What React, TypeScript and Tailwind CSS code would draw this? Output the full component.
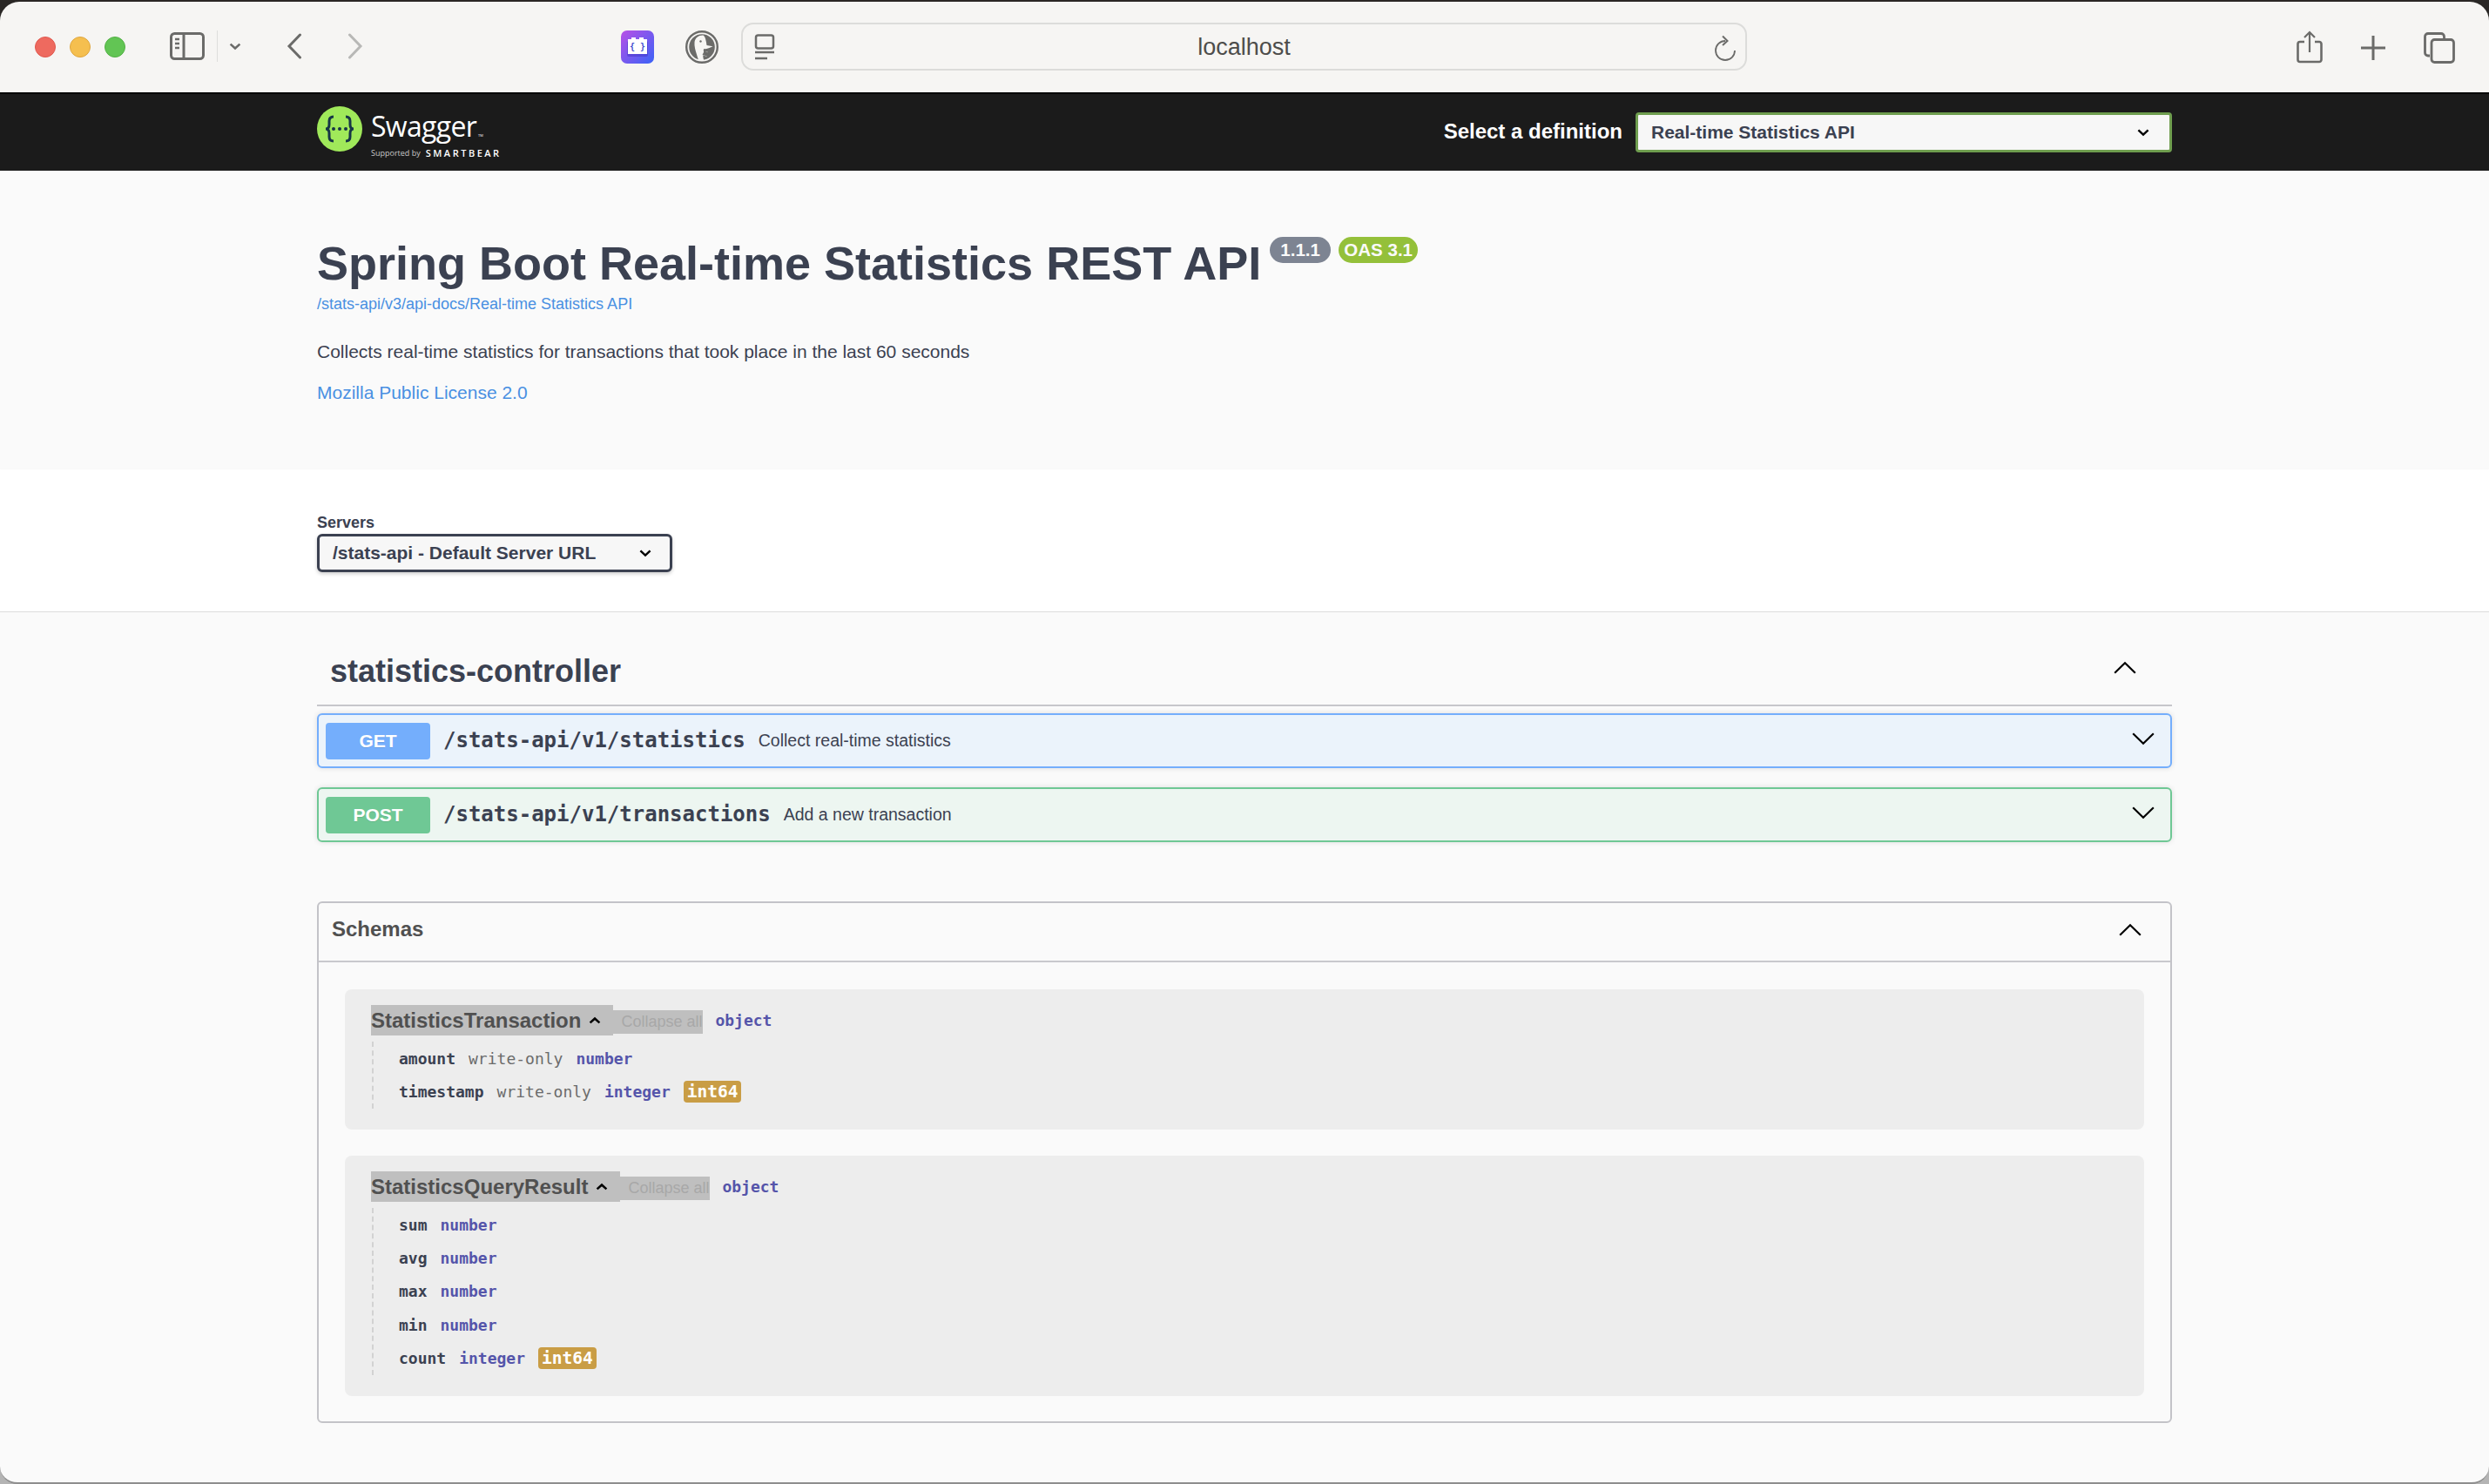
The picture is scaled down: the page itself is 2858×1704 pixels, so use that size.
import type { ReactNode } from "react";

const mono = "font-['DejaVu_Sans_Mono',monospace]";

function Caret({ up, width, height, stroke, className }: { up?: boolean; width: number; height: number; stroke: number; className?: string }) {
  const pad = stroke;
  const d = up
    ? `M${pad} ${height - pad}L${width / 2} ${pad}L${width - pad} ${height - pad}`
    : `M${pad} ${pad}L${width / 2} ${height - pad}L${width - pad} ${pad}`;
  return (
    <svg width={width} height={height} viewBox={`0 0 ${width} ${height}`} className={className} fill="none" stroke="currentColor" strokeWidth={stroke}>
      <path d={d} />
    </svg>
  );
}

function SwaggerLogo() {
  return (
    <div className="mb-[1px] flex items-start">
      <svg width="52" height="52" viewBox="0 0 52 52" className="shrink-0">
        <circle cx="26" cy="26" r="26" fill="#a0e95a" />
        <path d="M19 12c-4 0-5 2-5 5v4c0 3-1 5-4 5 3 0 4 2 4 5v4c0 3 1 5 5 5" fill="none" stroke="#173646" strokeWidth="3" />
        <path d="M33 12c4 0 5 2 5 5v4c0 3 1 5 4 5-3 0-4 2-4 5v4c0 3-1 5-5 5" fill="none" stroke="#173646" strokeWidth="3" />
        <circle cx="19" cy="26" r="2" fill="#173646" />
        <circle cx="26" cy="26" r="2" fill="#173646" />
        <circle cx="33" cy="26" r="2" fill="#173646" />
      </svg>
      <div className="ml-[10px] mt-[5px] flex flex-col font-['Open_Sans',sans-serif] text-white">
        <div className="flex items-end">
          <span className="text-[32px] leading-[36px] tracking-[-0.7px]">Swagger</span>
          <span className="mb-[5px] ml-[2px] text-[4px] leading-none">TM</span>
        </div>
        <div className="mt-[7px] flex items-center whitespace-nowrap leading-none">
          <span className="text-[9px] text-[#c8c8c8]">Supported by</span>
          <span className="ml-[6px] text-[11px] font-semibold tracking-[2.5px]">SMARTBEAR</span>
        </div>
      </div>
    </div>
  );
}

function BrowserBar() {
  return (
    <div className="flex h-[104px] shrink-0 items-start rounded-t-[22px] bg-[#f6f5f3] pt-[24px] text-[#6b6b69]">
      <div className="ml-[40px] mt-[16px] flex gap-[16px]">
        <div className="h-[24px] w-[24px] rounded-full border border-[#e0584e] bg-[#ee6a5f]" />
        <div className="h-[24px] w-[24px] rounded-full border border-[#dfa63e] bg-[#f5bf4f]" />
        <div className="h-[24px] w-[24px] rounded-full border border-[#52b044] bg-[#62c554]" />
      </div>
      <svg width="40" height="32" viewBox="0 0 40 32" className="ml-[51px] mt-[11px]" fill="none" stroke="#6b6b69" strokeWidth="3">
        <rect x="1.5" y="1.5" width="37" height="29" rx="4" />
        <path d="M16 2v28" />
        <path d="M6 8h5M6 13h5M6 18h5" strokeWidth="2.5" />
      </svg>
      <div className="ml-[14px] mt-[9px] h-[36px] w-px bg-[#dededc]" />
      <Caret width={16} height={10} stroke={2.6} className="ml-[12px] mt-[22px]" />
      <svg width="18" height="30" viewBox="0 0 18 30" className="ml-[51px] mt-[12px]" fill="none" stroke="#6b6b69" strokeWidth="3" strokeLinecap="round">
        <path d="M15.500 2L3 15l12.500 13" />
      </svg>
      <svg width="18" height="30" viewBox="0 0 18 30" className="ml-[52px] mt-[12px]" fill="none" stroke="#b8b8b6" strokeWidth="3" strokeLinecap="round">
        <path d="M2.500 2L15 15 2.500 28" />
      </svg>
      <svg width="38" height="38" viewBox="0 0 38 38" className="ml-[296px] mt-[9px]">
        <defs>
          <linearGradient id="extGradient" x1="0" y1="0" x2="1" y2="1">
            <stop offset="0" stopColor="#b94fe6" />
            <stop offset="1" stopColor="#3a63f7" />
          </linearGradient>
        </defs>
        <rect width="38" height="38" rx="7" fill="url(#extGradient)" />
        <rect x="7" y="12" width="24" height="18" rx="2" fill="#3f2fc0" opacity="0.45" />
        <path d="M8 10h4V8h5v2h4V8h5v2h4v17H8z" fill="#ffffff" />
        <text x="19" y="22" textAnchor="middle" fontSize="10" fontWeight="700" fill="#3f4fd0" fontFamily="DejaVu Sans Mono, monospace">{"{ }"}</text>
      </svg>
      <svg width="38" height="38" viewBox="0 0 38 38" className="ml-[36px] mt-[9px]">
        <circle cx="19" cy="19" r="17.800" fill="#f6f5f3" stroke="#6b6b69" strokeWidth="2.400" />
        <circle cx="19" cy="19" r="14.800" fill="#6b6b69" />
        <path d="M20 5.500c-5 0-9 3-9.500 8-.4 5 1 9 2.500 14 .6 2.300 1.500 5 2.200 6.500 2 .5 4 .5 6 .2-.7-2.200-1-4-.9-5.700l4.200 1.300 1-5.300-4.200.6c-.6-1.800-.8-3 .2-4 2.500.3 7-1.200 10-2.900l-7-1.300c-.7-4.700-1.500-9.700-4-11.400z" fill="#f6f5f3" />
        <circle cx="17.500" cy="12.500" r="1.200" fill="#6b6b69" />
        <path d="M19.500 28l2-4 5 1.500v4.500z" fill="#6b6b69" />
      </svg>
      <div className="relative ml-[26px] flex h-[55px] w-[1155px] items-center justify-center rounded-[14px] border-2 border-[#dcdcda] bg-[#f6f5f3] pt-[2px]">
        <svg width="24" height="30" viewBox="0 0 24 30" className="absolute left-[13px] top-[11px]" fill="none" stroke="#6b6b69">
          <rect x="2" y="1.5" width="20" height="15" rx="2.5" strokeWidth="2.5" />
          <path d="M1 21h22" strokeWidth="2.5" />
          <path d="M1 28h14" strokeWidth="2.5" />
        </svg>
        <span className="font-['Liberation_Sans',sans-serif] text-[27px] leading-none text-[#4d4d4b]">localhost</span>
        <svg width="26" height="30" viewBox="0 0 26 30" className="absolute right-[10px] top-[12px]" fill="none" stroke="#6b6b69" strokeWidth="1.800">
          <path d="M24 18A11 11 0 1 1 13 7" />
          <path d="M10 1.500l5.500 5.500-5.500 5" strokeWidth="2" />
        </svg>
      </div>
      <div className="ml-[631px] mt-[9px] flex items-start">
        <svg width="30" height="38" viewBox="0 0 30 38" fill="none" stroke="#6b6b69" strokeWidth="2.6">
          <path d="M9 13H4a2.500 2.500 0 0 0-2.500 2.500v18A2.500 2.500 0 0 0 4 36h22a2.500 2.500 0 0 0 2.500-2.500v-18A2.500 2.500 0 0 0 26 13h-5" />
          <path d="M15 25V2M9 8l6-6 6 6" strokeWidth="2.2" />
        </svg>
        <svg width="28" height="28" viewBox="0 0 28 28" className="ml-[44px] mt-[6px]" fill="none" stroke="#6b6b69" strokeWidth="3">
          <path d="M14 0v28M0 14h28" />
        </svg>
        <svg width="36" height="36" viewBox="0 0 36 36" className="ml-[44px] mt-[2px]" fill="none" stroke="#6b6b69" strokeWidth="2.8">
          <path d="M7 27H5a3.500 3.500 0 0 1-3.500-3.500V5A3.500 3.500 0 0 1 5 1.500h15A3.500 3.500 0 0 1 23.500 5v3" />
          <rect x="9" y="8.500" width="25.500" height="26" rx="3.500" />
        </svg>
      </div>
    </div>
  );
}

function TopBar() {
  return (
    <div className="h-[90px] shrink-0 border-t-2 border-[#000000] bg-[#1b1b1b] pl-[364px]">
      <div className="flex h-[88px] items-center">
        <SwaggerLogo />
        <span className="ml-[auto] mb-[2px] font-['Liberation_Sans',sans-serif] text-[24px] font-bold text-white">Select a definition</span>
        <div className="ml-[15px] mr-[364px] flex h-[46px] w-[616px] items-center justify-between rounded-[4px] border-[3px] border-[#6f9e4f] bg-[#f7f7f7] pl-[15px] pr-[22px] font-['Liberation_Sans',sans-serif] text-[21px] font-bold text-[#3b4151]">
          Real-time Statistics API
          <Caret width={16} height={10} stroke={2.4} className="text-black" />
        </div>
      </div>
    </div>
  );
}

function InfoSection() {
  return (
    <div className="h-[343px] shrink-0 bg-[#fafafa] pl-[364px] pt-[70px] font-['Liberation_Sans',sans-serif]">
      <div className="flex items-start">
        <h1 className="text-[54px] font-bold leading-[72px] text-[#3b4151]">Spring Boot Real-time Statistics REST API</h1>
        <span className="ml-[10px] mt-[6px] flex h-[30px] w-[70px] items-center justify-center rounded-[15px] bg-[#7d8492] text-[20.5px] font-bold text-[#fafafa]">1.1.1</span>
        <span className="ml-[9px] mt-[6px] flex h-[30px] w-[91px] items-center justify-center rounded-[15px] bg-[#94c03a] text-[20.5px] font-bold text-[#fafafa]">OAS 3.1</span>
      </div>
      <div className="mt-[-1px] text-[18px] leading-[24px] text-[#4990e2]">/stats-api/v3/api-docs/Real-time Statistics API</div>
      <div className="mt-[29px] text-[21px] leading-[28px] text-[#3b4151]">Collects real-time statistics for transactions that took place in the last 60 seconds</div>
      <div className="mt-[19px] text-[21px] leading-[28px] text-[#4990e2]">Mozilla Public License 2.0</div>
    </div>
  );
}

function ServersSection() {
  return (
    <div className="h-[164px] shrink-0 border-b border-[#dcdcdc] bg-white pl-[364px] pt-[50px] font-['Liberation_Sans',sans-serif] shadow-[0_1px_2px_rgba(0,0,0,0.15)]">
      <div className="text-[18px] font-bold leading-[23px] text-[#3b4151]">Servers</div>
      <div className="mt-[1px] flex h-[44px] w-[408px] items-center justify-between rounded-[6px] border-[3px] border-[#3b4151] bg-[#f7f7f7] pl-[15px] pr-[20px] text-[21px] font-bold text-[#3b4151] shadow-[0_2px_4px_rgba(0,0,0,0.2)]">
        /stats-api - Default Server URL
        <Caret width={16} height={10} stroke={2.4} className="text-black" />
      </div>
    </div>
  );
}

function OpBlock({ method, path, summary, badge, border, bg }: { method: string; path: string; summary: string; badge: string; border: string; bg: string }) {
  return (
    <div className={`flex h-[63px] items-center rounded-[6px] border-2 pl-[8px] pr-[17px] font-['Liberation_Sans',sans-serif] shadow-[0_0_6px_rgba(0,0,0,0.12)] ${border} ${bg}`}>
      <span className={`flex h-[42px] w-[120px] items-center justify-center rounded-[4px] text-[21px] font-bold text-white [text-shadow:0_1px_0_rgba(0,0,0,0.1)] ${badge}`}>{method}</span>
      <span className={`ml-[15px] mb-[1px] text-[24px] font-bold text-[#3b4151] ${mono}`}>{path}</span>
      <span className="ml-[15px] text-[19.500px] text-[#3b4151]">{summary}</span>
      <Caret width={28} height={16} stroke={2.2} className="ml-auto mb-[5px] text-black" />
    </div>
  );
}

function SchemaProp({ name, access, type, format }: { name: string; access?: string; type: string; format?: string }) {
  return (
    <div className={`flex h-[38.400px] items-center gap-[15px] text-[18px] ${mono}`}>
      <span className="font-bold text-[#3b4151]">{name}</span>
      {access && <span className="text-[#6b6b6b]">{access}</span>}
      <span className="font-semibold text-[#5555aa]">{type}</span>
      {format && <span className="rounded-[4px] bg-[#c99d45] px-[4px] text-[19.500px] font-bold leading-[25px] text-white">{format}</span>}
    </div>
  );
}

function SchemaModel({ name, height, children }: { name: string; height: string; children: ReactNode }) {
  return (
    <div className={`rounded-[8px] bg-[#ededed] pl-[30px] pt-[18px] ${height}`}>
      <div className="flex items-center">
        <div className="flex h-[35px] items-center gap-[8px] bg-[#bfbfbf] pr-[13px] font-['Liberation_Sans',sans-serif] text-[24px] font-bold text-[#505050]">
          {name}
          <Caret up width={16} height={10} stroke={2.6} className="text-black" />
        </div>
        <div className="mt-[4px] flex h-[27px] w-[103px] items-center whitespace-nowrap bg-[#bfbfbf] pl-[9px] font-['Liberation_Sans',sans-serif] text-[18px] text-[#a8a8a8]">Collapse all</div>
        <span className={`ml-[14px] text-[18px] font-semibold text-[#5555aa] ${mono}`}>object</span>
      </div>
      <div className="ml-[1px] mt-[7px] w-fit border-l-2 border-dashed border-[#d2d2d2] pl-[29px]">{children}</div>
    </div>
  );
}

function Operations() {
  return (
    <div className="mx-[364px] flex-1">
      <div className="flex h-[108px] items-center justify-between border-b-2 border-[#c6c6cb] pb-[2px] pl-[15px] pr-[40px] pt-[32px] font-['Liberation_Sans',sans-serif]">
        <h3 className="text-[36px] font-bold text-[#3b4151]">statistics-controller</h3>
        <Caret up width={28} height={16} stroke={2.2} className="mb-[8px] text-black" />
      </div>
      <div className="mt-[8px] flex flex-col gap-[22px]">
        <OpBlock method="GET" path="/stats-api/v1/statistics" summary="Collect real-time statistics" badge="bg-[#74aefc]" border="border-[#74aefc]" bg="bg-[#ebf3fb]" />
        <OpBlock method="POST" path="/stats-api/v1/transactions" summary="Add a new transaction" badge="bg-[#6fc895]" border="border-[#6fc895]" bg="bg-[#edf6f1]" />
      </div>
      <div className="mt-[68px] h-[599px] rounded-[6px] border-2 border-[#c3c3c8]">
        <div className="flex h-[68px] items-center justify-between border-b-2 border-[#c8c8cd] pl-[15px] pr-[32px] font-['Liberation_Sans',sans-serif]">
          <span className="mb-[7px] text-[24px] font-bold text-[#505050]">Schemas</span>
          <Caret up width={28} height={16} stroke={2.2} className="mb-[4px] text-black" />
        </div>
        <div className="flex flex-col gap-[30px] pl-[30px] pr-[30px] pt-[31px]">
          <SchemaModel name="StatisticsTransaction" height="h-[161px]">
            <SchemaProp name="amount" access="write-only" type="number" />
            <SchemaProp name="timestamp" access="write-only" type="integer" format="int64" />
          </SchemaModel>
          <SchemaModel name="StatisticsQueryResult" height="h-[276px]">
            <SchemaProp name="sum" type="number" />
            <SchemaProp name="avg" type="number" />
            <SchemaProp name="max" type="number" />
            <SchemaProp name="min" type="number" />
            <SchemaProp name="count" type="integer" format="int64" />
          </SchemaModel>
        </div>
      </div>
    </div>
  );
}

export default function App() {
  return (
    <div className="flex h-[1704px] w-[2858px] flex-col overflow-hidden bg-[linear-gradient(180deg,#2a2725_50%,#b4b4b4_50%)] pt-[2px]">
      <BrowserBar />
      <TopBar />
      <InfoSection />
      <ServersSection />
      <div className="flex flex-1 flex-col rounded-b-[20px] border-b-2 border-[#8e8e8e] bg-[#fafafa]">
        <Operations />
      </div>
    </div>
  );
}
